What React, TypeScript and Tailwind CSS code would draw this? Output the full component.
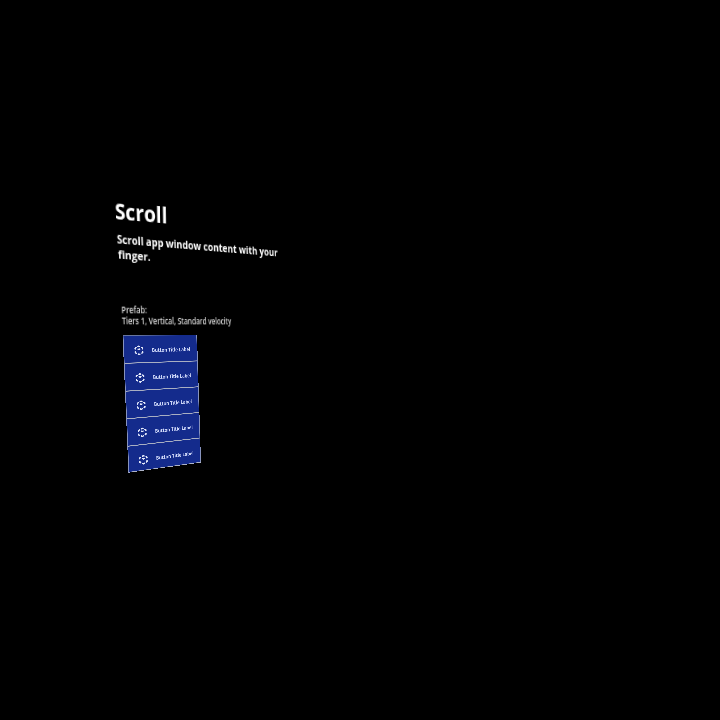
import { useLayoutEffect, useRef, useState, type ReactNode } from "react";

type Point = [number, number];
type Quad = [Point, Point, Point, Point];

// Solves the projective map that takes the source quad to the target quad.
function projection(from: Quad, to: Quad): string {
  const rows: number[][] = [];
  from.forEach(([x, y], i) => {
    const [u, v] = to[i];
    rows.push([x, y, 1, 0, 0, 0, -u * x, -u * y, u]);
    rows.push([0, 0, 0, x, y, 1, -v * x, -v * y, v]);
  });
  for (let c = 0; c < 8; c++) {
    let pivot = c;
    for (let r = c + 1; r < 8; r++) {
      if (Math.abs(rows[r][c]) > Math.abs(rows[pivot][c])) pivot = r;
    }
    [rows[c], rows[pivot]] = [rows[pivot], rows[c]];
    const p = rows[c][c];
    rows[c] = rows[c].map((n) => n / p);
    for (let r = 0; r < 8; r++) {
      if (r === c) continue;
      const f = rows[r][c];
      rows[r] = rows[r].map((n, k) => n - f * rows[c][k]);
    }
  }
  const [a, b, c, d, e, f, g, h] = rows.map((r) => r[8]);
  return `matrix3d(${[a, d, 0, g, b, e, 0, h, 0, 0, 1, 0, c, f, 0, 1].map((n) => n.toFixed(10)).join(",")})`;
}

// Places its content in the scene. `inset` gives the share of the box height
// at which the quad's top and bottom edges lie.
function Surface({
  quad,
  inset = [0, 1],
  className = "",
  children,
}: {
  quad: Quad;
  inset?: [number, number];
  className?: string;
  children: ReactNode;
}) {
  const ref = useRef<HTMLDivElement>(null);
  const [transform, setTransform] = useState<string>();
  useLayoutEffect(() => {
    const el = ref.current!;
    const w = el.offsetWidth;
    const t = el.offsetHeight * inset[0];
    const b = el.offsetHeight * inset[1];
    setTransform(projection([[0, t], [w, t], [w, b], [0, b]], quad));
  }, []);
  return (
    <div ref={ref} style={{ transform }} className={`absolute left-0 top-0 origin-top-left whitespace-nowrap ${className}`}>
      {children}
    </div>
  );
}

const CAPS: [number, number] = [0.174, 0.888];

function BoxIcon() {
  return (
    <svg viewBox="0 0 36 40" className="h-[42px] w-[36px]" fill="none" stroke="#e4e9fa" strokeWidth="5.5" strokeLinecap="round" strokeLinejoin="round">
      <path d="M15 5l3-2 3 2M4 14v-3l3-2M29 9l3 2v3M4 26v3l3 2M29 31l3-2v-3M15 35l3 2 3-2M15 15l3 2 3-2" />
    </svg>
  );
}

const buttons = [1, 2, 3, 4, 5];

export default function App() {
  return (
    <main className="relative h-[720px] w-[720px] overflow-hidden bg-black font-['Open_Sans','Noto_Sans',sans-serif] text-white">
      <Surface quad={[[114.5, 202], [166.9, 206.6], [167.1, 223.1], [115.2, 218.6]]} inset={CAPS} className="text-[22px] font-bold leading-none">
        Scroll
      </Surface>
      <Surface quad={[[116.8, 234.6], [277.4, 248.6], [277.6, 256.2], [117.1, 243.1]]} inset={CAPS} className="text-[11px] font-bold leading-none">
        Scroll app window content with your
      </Surface>
      <Surface quad={[[117.8, 250], [151, 252.7], [151, 260.8], [118.1, 258.3]]} inset={CAPS} className="text-[11px] font-bold leading-none">
        finger.
      </Surface>
      <Surface quad={[[121.3, 307.1], [147.2, 307.2], [147.4, 313.4], [121.5, 313.4]]} inset={CAPS} className="text-[8px] font-semibold leading-none text-[#d8d8d8]">
        Prefab:
      </Surface>
      <Surface quad={[[121.8, 318], [231, 318.7], [231.2, 324.5], [122, 324.4]]} inset={CAPS} className="text-[8px] font-semibold leading-none text-[#d8d8d8]">
        Tiers 1, Vertical, Standard velocity
      </Surface>
      <Surface quad={[[122.6, 335.2], [197, 334.8], [201, 462.5], [128.5, 472.7]]} className="w-[296px]">
        <div className="flex flex-col border-x-[3px] border-b-[3px] border-t-2 border-x-[#8793bd] border-b-[#aeb4c7] border-t-[#68769f]">
          {buttons.map((id) => (
            <button
              key={id}
              className="flex h-[111px] items-center border-b-4 border-[#a9afc2] bg-[#142b8c] pl-[38px] pt-[11px] text-left last:h-[103px] last:border-b-0 last:pt-[19px]"
            >
              <BoxIcon />
              <span className="ml-[32px] origin-center scale-y-[1.25] text-[17.5px] font-bold leading-none text-[#ced7f8]">Button Title Label</span>
            </button>
          ))}
        </div>
      </Surface>
    </main>
  );
}
